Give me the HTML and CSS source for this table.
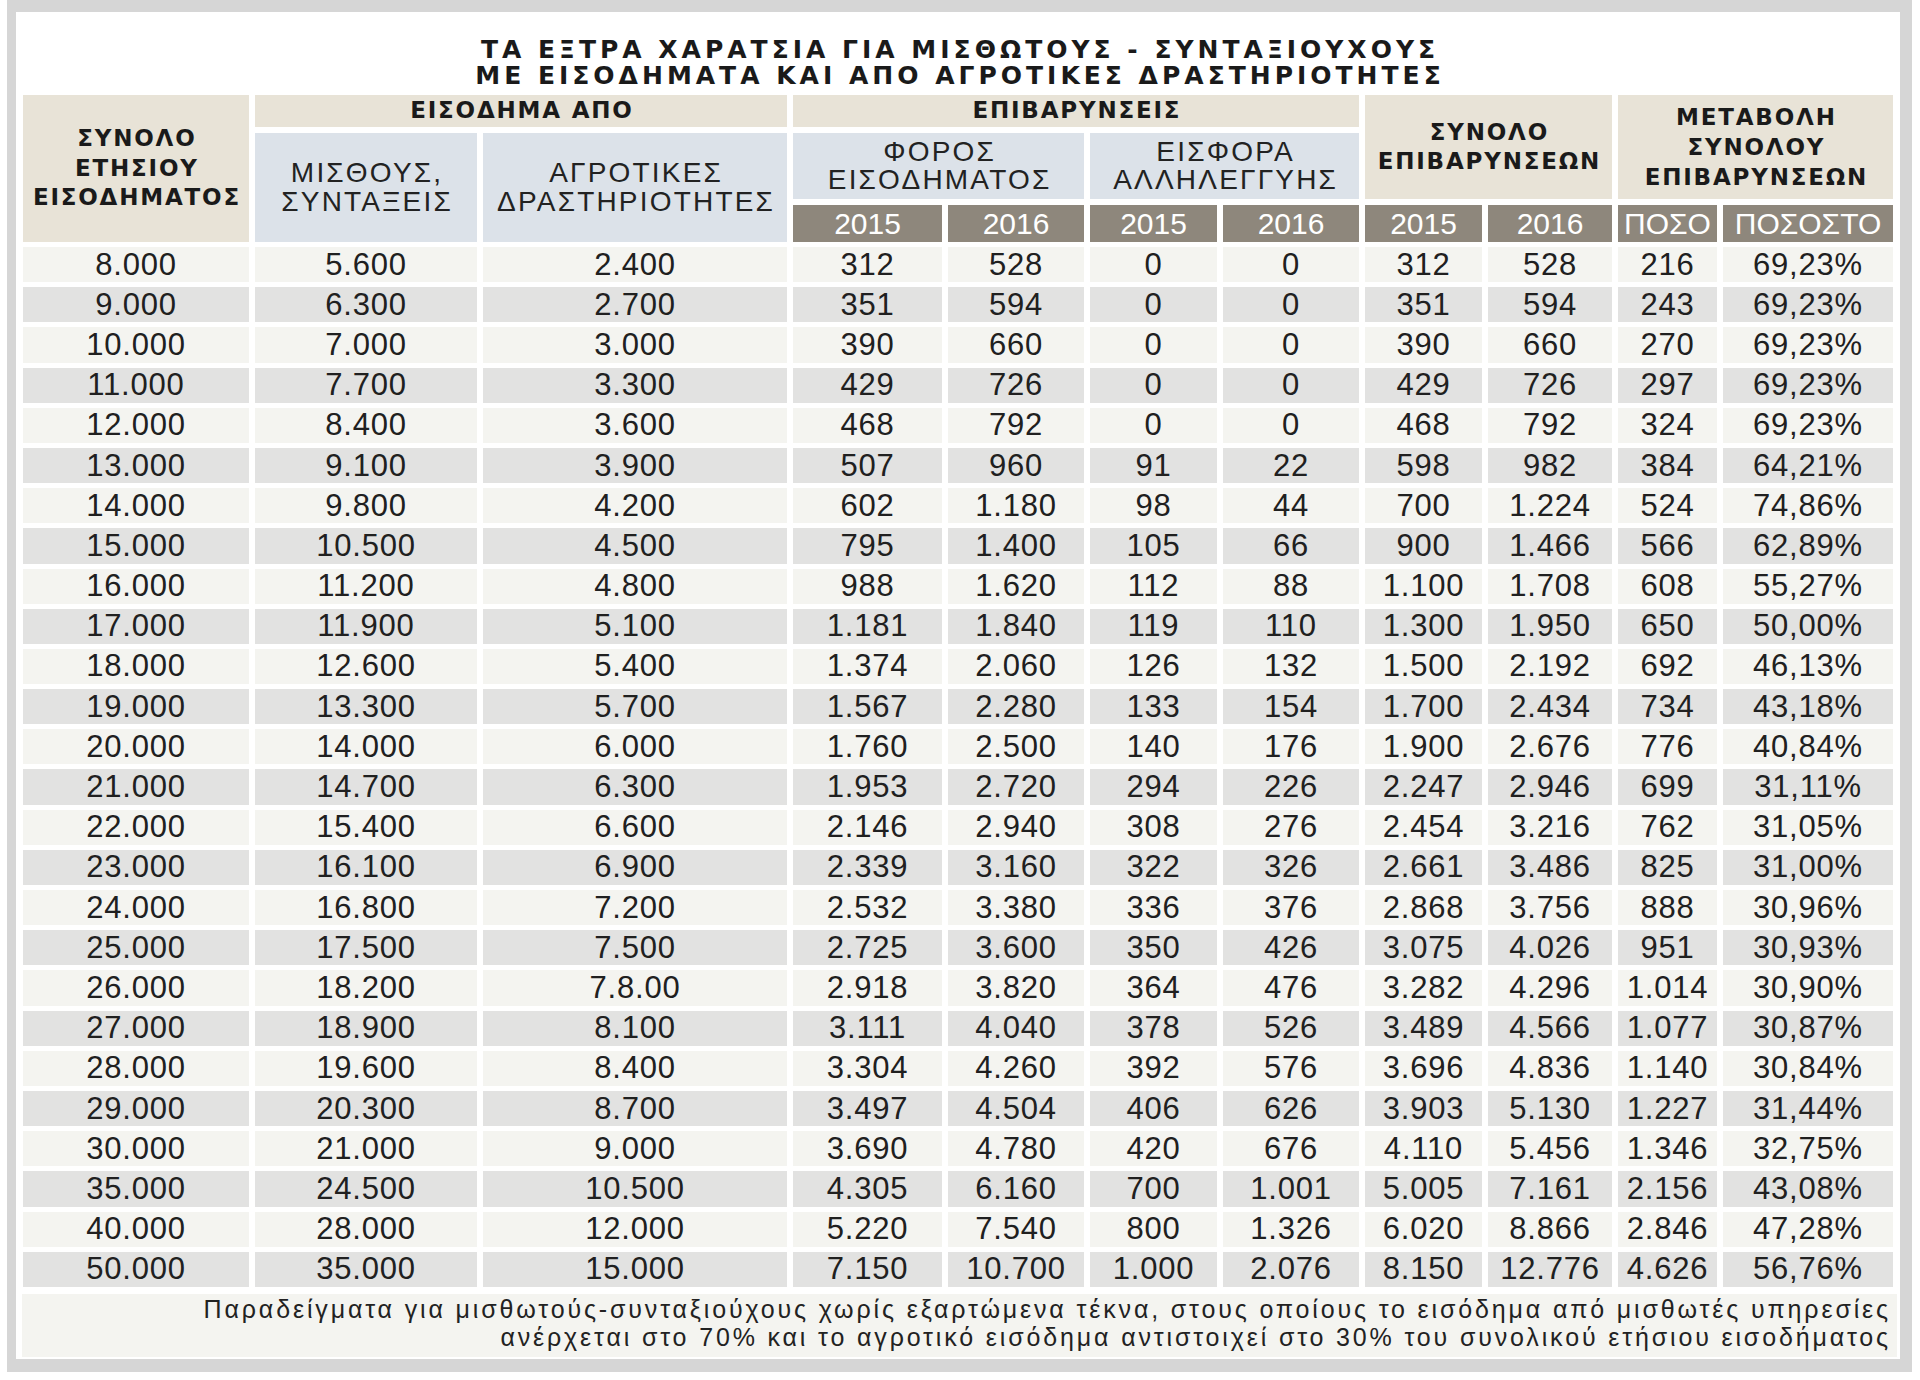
FILE: index.html
```html
<!DOCTYPE html>
<html lang="el">
<head>
<meta charset="utf-8">
<title>Τα έξτρα χαράτσια για μισθωτούς - συνταξιούχους</title>
<link rel="stylesheet" href="styles.css">
</head>
<body>
<div class="frame">
  <div class="card">
    <h1 class="title">ΤΑ ΕΞΤΡΑ ΧΑΡΑΤΣΙΑ ΓΙΑ ΜΙΣΘΩΤΟΥΣ - ΣΥΝΤΑΞΙΟΥΧΟΥΣ<br>ΜΕ ΕΙΣΟΔΗΜΑΤΑ ΚΑΙ ΑΠΟ ΑΓΡΟΤΙΚΕΣ ΔΡΑΣΤΗΡΙΟΤΗΤΕΣ</h1>

    <div class="grid thead">
      <div class="h beige g-total-income">ΣΥΝΟΛΟ<br>ΕΤΗΣΙΟΥ<br>ΕΙΣΟΔΗΜΑΤΟΣ</div>
      <div class="h beige g-income">ΕΙΣΟΔΗΜΑ ΑΠΟ</div>
      <div class="h beige g-charges">ΕΠΙΒΑΡΥΝΣΕΙΣ</div>
      <div class="h beige g-total">ΣΥΝΟΛΟ<br>ΕΠΙΒΑΡΥΝΣΕΩΝ</div>
      <div class="h beige g-change">ΜΕΤΑΒΟΛΗ<br>ΣΥΝΟΛΟΥ<br>ΕΠΙΒΑΡΥΝΣΕΩΝ</div>
      <div class="s blue g-wages">ΜΙΣΘΟΥΣ,<br>ΣΥΝΤΑΞΕΙΣ</div>
      <div class="s blue g-farm">ΑΓΡΟΤΙΚΕΣ<br>ΔΡΑΣΤΗΡΙΟΤΗΤΕΣ</div>
      <div class="s blue g-tax">ΦΟΡΟΣ<br>ΕΙΣΟΔΗΜΑΤΟΣ</div>
      <div class="s blue g-sol">ΕΙΣΦΟΡΑ<br>ΑΛΛΗΛΕΓΓΥΗΣ</div>
      <div class="y">2015</div>
      <div class="y">2016</div>
      <div class="y">2015</div>
      <div class="y">2016</div>
      <div class="y">2015</div>
      <div class="y">2016</div>
      <div class="y">ΠΟΣΟ</div>
      <div class="y">ΠΟΣΟΣΤΟ</div>
    </div>

    <div class="grid tbody">
      <div class="row"><span>8.000</span><span>5.600</span><span>2.400</span><span>312</span><span>528</span><span>0</span><span>0</span><span>312</span><span>528</span><span>216</span><span>69,23%</span></div>
      <div class="row"><span>9.000</span><span>6.300</span><span>2.700</span><span>351</span><span>594</span><span>0</span><span>0</span><span>351</span><span>594</span><span>243</span><span>69,23%</span></div>
      <div class="row"><span>10.000</span><span>7.000</span><span>3.000</span><span>390</span><span>660</span><span>0</span><span>0</span><span>390</span><span>660</span><span>270</span><span>69,23%</span></div>
      <div class="row"><span>11.000</span><span>7.700</span><span>3.300</span><span>429</span><span>726</span><span>0</span><span>0</span><span>429</span><span>726</span><span>297</span><span>69,23%</span></div>
      <div class="row"><span>12.000</span><span>8.400</span><span>3.600</span><span>468</span><span>792</span><span>0</span><span>0</span><span>468</span><span>792</span><span>324</span><span>69,23%</span></div>
      <div class="row"><span>13.000</span><span>9.100</span><span>3.900</span><span>507</span><span>960</span><span>91</span><span>22</span><span>598</span><span>982</span><span>384</span><span>64,21%</span></div>
      <div class="row"><span>14.000</span><span>9.800</span><span>4.200</span><span>602</span><span>1.180</span><span>98</span><span>44</span><span>700</span><span>1.224</span><span>524</span><span>74,86%</span></div>
      <div class="row"><span>15.000</span><span>10.500</span><span>4.500</span><span>795</span><span>1.400</span><span>105</span><span>66</span><span>900</span><span>1.466</span><span>566</span><span>62,89%</span></div>
      <div class="row"><span>16.000</span><span>11.200</span><span>4.800</span><span>988</span><span>1.620</span><span>112</span><span>88</span><span>1.100</span><span>1.708</span><span>608</span><span>55,27%</span></div>
      <div class="row"><span>17.000</span><span>11.900</span><span>5.100</span><span>1.181</span><span>1.840</span><span>119</span><span>110</span><span>1.300</span><span>1.950</span><span>650</span><span>50,00%</span></div>
      <div class="row"><span>18.000</span><span>12.600</span><span>5.400</span><span>1.374</span><span>2.060</span><span>126</span><span>132</span><span>1.500</span><span>2.192</span><span>692</span><span>46,13%</span></div>
      <div class="row"><span>19.000</span><span>13.300</span><span>5.700</span><span>1.567</span><span>2.280</span><span>133</span><span>154</span><span>1.700</span><span>2.434</span><span>734</span><span>43,18%</span></div>
      <div class="row"><span>20.000</span><span>14.000</span><span>6.000</span><span>1.760</span><span>2.500</span><span>140</span><span>176</span><span>1.900</span><span>2.676</span><span>776</span><span>40,84%</span></div>
      <div class="row"><span>21.000</span><span>14.700</span><span>6.300</span><span>1.953</span><span>2.720</span><span>294</span><span>226</span><span>2.247</span><span>2.946</span><span>699</span><span>31,11%</span></div>
      <div class="row"><span>22.000</span><span>15.400</span><span>6.600</span><span>2.146</span><span>2.940</span><span>308</span><span>276</span><span>2.454</span><span>3.216</span><span>762</span><span>31,05%</span></div>
      <div class="row"><span>23.000</span><span>16.100</span><span>6.900</span><span>2.339</span><span>3.160</span><span>322</span><span>326</span><span>2.661</span><span>3.486</span><span>825</span><span>31,00%</span></div>
      <div class="row"><span>24.000</span><span>16.800</span><span>7.200</span><span>2.532</span><span>3.380</span><span>336</span><span>376</span><span>2.868</span><span>3.756</span><span>888</span><span>30,96%</span></div>
      <div class="row"><span>25.000</span><span>17.500</span><span>7.500</span><span>2.725</span><span>3.600</span><span>350</span><span>426</span><span>3.075</span><span>4.026</span><span>951</span><span>30,93%</span></div>
      <div class="row"><span>26.000</span><span>18.200</span><span>7.8.00</span><span>2.918</span><span>3.820</span><span>364</span><span>476</span><span>3.282</span><span>4.296</span><span>1.014</span><span>30,90%</span></div>
      <div class="row"><span>27.000</span><span>18.900</span><span>8.100</span><span>3.111</span><span>4.040</span><span>378</span><span>526</span><span>3.489</span><span>4.566</span><span>1.077</span><span>30,87%</span></div>
      <div class="row"><span>28.000</span><span>19.600</span><span>8.400</span><span>3.304</span><span>4.260</span><span>392</span><span>576</span><span>3.696</span><span>4.836</span><span>1.140</span><span>30,84%</span></div>
      <div class="row"><span>29.000</span><span>20.300</span><span>8.700</span><span>3.497</span><span>4.504</span><span>406</span><span>626</span><span>3.903</span><span>5.130</span><span>1.227</span><span>31,44%</span></div>
      <div class="row"><span>30.000</span><span>21.000</span><span>9.000</span><span>3.690</span><span>4.780</span><span>420</span><span>676</span><span>4.110</span><span>5.456</span><span>1.346</span><span>32,75%</span></div>
      <div class="row"><span>35.000</span><span>24.500</span><span>10.500</span><span>4.305</span><span>6.160</span><span>700</span><span>1.001</span><span>5.005</span><span>7.161</span><span>2.156</span><span>43,08%</span></div>
      <div class="row"><span>40.000</span><span>28.000</span><span>12.000</span><span>5.220</span><span>7.540</span><span>800</span><span>1.326</span><span>6.020</span><span>8.866</span><span>2.846</span><span>47,28%</span></div>
      <div class="row"><span>50.000</span><span>35.000</span><span>15.000</span><span>7.150</span><span>10.700</span><span>1.000</span><span>2.076</span><span>8.150</span><span>12.776</span><span>4.626</span><span>56,76%</span></div>
    </div>

    <p class="note">Παραδείγματα για μισθωτούς-συνταξιούχους χωρίς εξαρτώμενα τέκνα, στους οποίους το εισόδημα από μισθωτές υπηρεσίες<br>ανέρχεται στο 70% και το αγροτικό εισόδημα αντιστοιχεί στο 30% του συνολικού ετήσιου εισοδήματος</p>
  </div>
</div>
</body>
</html>
```
FILE: styles.css
```css
body {
  margin: 0;
  background: #ffffff;
  color: #1d1d1d;
  font-family: "Liberation Sans", Arial, sans-serif;
}

.frame {
  width: max-content;
  margin-left: 7px;
  background: #d6d6d6;
  padding: 12px 12px 13px 9px;
}

.card {
  width: 1870px;
  background: #ffffff;
  padding: 25px 7px 2px 7px;
}

.title {
  margin: 0 0 6px;
  font-family: "DejaVu Sans", sans-serif;
  font-weight: bold;
  font-size: 25px;
  line-height: 26px;
  letter-spacing: 4px;
  padding-left: 4px;
  text-align: center;
  color: #1a1a1a;
}

.grid {
  display: grid;
  grid-template-columns: 226px 222px 304px 149px 136px 127px 136px 117px 124px 99px 170px;
  column-gap: 6px;
}

.thead {
  grid-template-rows: 32px 66px 37px;
  row-gap: 6px;
}

.thead > div {
  display: flex;
  align-items: center;
  justify-content: center;
  text-align: center;
}

.h {
  font-family: "DejaVu Sans", sans-serif;
  font-weight: bold;
  font-size: 23px;
  line-height: 29.5px;
  letter-spacing: 1.8px;
  padding-left: 1.8px;
  color: #1a1a1a;
}

.s {
  font-size: 28px;
  line-height: 28.5px;
  letter-spacing: 2.2px;
  padding-left: 2.2px;
  color: #222222;
}

.beige { background: #e8e3d7; }
.blue { background: #dce2e9; }

.y {
  background: #8e877c;
  color: #ffffff;
  font-size: 30px;
  grid-row: 3;
}

.g-total-income { grid-column: 1; grid-row: 1 / 4; }
.g-income { grid-column: 2 / 4; grid-row: 1; }
.g-charges { grid-column: 4 / 8; grid-row: 1; }
.g-total { grid-column: 8 / 10; grid-row: 1 / 3; }
.g-change { grid-column: 10 / 12; grid-row: 1 / 3; line-height: 30px; }
.g-wages { grid-column: 2; grid-row: 2 / 4; }
.g-farm { grid-column: 3; grid-row: 2 / 4; }
.g-tax { grid-column: 4 / 6; grid-row: 2; }
.g-sol { grid-column: 6 / 8; grid-row: 2; }

.tbody {
  grid-auto-rows: 35.2px;
  row-gap: 5px;
  margin-top: 5px;
}

.row { display: contents; }

.row > span {
  display: flex;
  align-items: center;
  justify-content: center;
  font-size: 31px;
  letter-spacing: 0.8px;
  color: #202020;
  background: #f4f4f0;
}

.row:nth-child(even) > span {
  background: #e2e2e1;
}

.note {
  margin: 7px -4px 0 -1px;
  height: 63px;
  box-sizing: border-box;
  padding: 1px 6px 0 0;
  background: #f4f4f0;
  text-align: right;
  font-size: 25px;
  line-height: 28px;
  letter-spacing: 2.85px;
  color: #222222;
  white-space: nowrap;
}
```
